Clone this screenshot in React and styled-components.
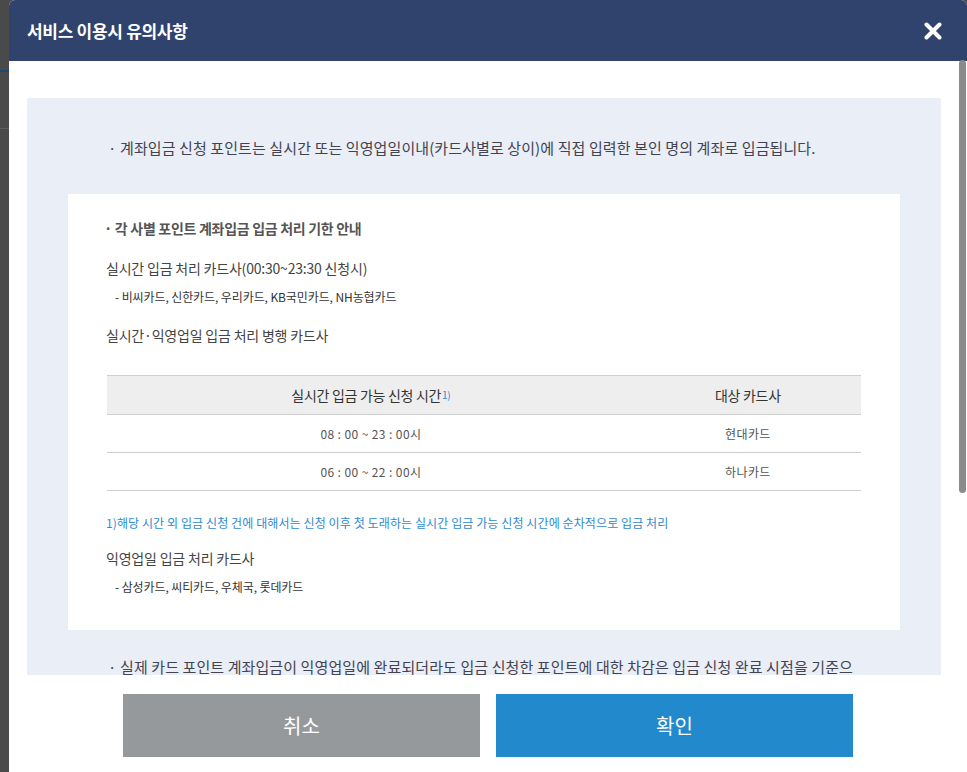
import React from "react";
import styled, { createGlobalStyle } from "styled-components";

const GlobalStyle = createGlobalStyle`
  html, body {
    margin: 0;
    height: 100%;
    overflow: hidden;
  }
  body {
    font-family: "Noto Sans CJK KR", "Noto Sans", sans-serif;
    background:
      linear-gradient(to bottom,
        transparent 70px, #1d4a73 70px, #1d4a73 72px, transparent 72px,
        transparent 128px, #5c5c5c 128px, #5c5c5c 129px, transparent 129px),
      #4a4a4a;
  }
`;

const Page = styled.div`
  height: 100vh;
  display: flex;
  padding-left: 9px;
`;

const Modal = styled.div`
  position: relative;
  width: 958px;
  height: 100%;
  display: flex;
  flex-direction: column;
  background: #fff;
  border-radius: 6px 6px 0 0;
  overflow: hidden;
`;

const Header = styled.header`
  height: 61px;
  flex-shrink: 0;
  display: flex;
  align-items: center;
  justify-content: space-between;
  padding: 0 25px 0 18px;
  background: #2f436d;
`;

const Title = styled.h1`
  margin: 0;
  color: #fff;
  font-size: 17px;
  font-weight: 700;
  letter-spacing: -0.3px;
`;

const CloseButton = styled.button`
  width: 18px;
  height: 18px;
  padding: 0;
  border: 0;
  background: none;
  cursor: pointer;
  display: flex;
`;

const Body = styled.div`
  flex: 1;
  overflow-y: auto;
  scrollbar-width: none;
  padding: 37px 26px 37px 18px;

  &::-webkit-scrollbar {
    display: none;
  }
`;

const ScrollThumb = styled.div`
  position: absolute;
  top: 60px;
  right: 1px;
  width: 7px;
  height: 433px;
  border-radius: 4px;
  background: #8b8b8b;
`;

const NoticeBox = styled.div`
  background: #eaeef7;
  padding: 39px 41px 60px;
`;

const Notice = styled.p`
  margin: ${(p) => p.$top || 0}px 34px 0 40px;
  font-size: 15px;
  line-height: 22px;
  color: #434350;
  letter-spacing: 0.1px;
`;

const Guide = styled.div`
  background: #fff;
  margin-top: 35px;
  padding: 24px 39px 33px 36px;
`;

const GuideTitle = styled.p`
  margin: 0;
  font-size: 14px;
  line-height: 20px;
  font-weight: 700;
  color: #555;
  letter-spacing: -0.3px;
`;

const Line = styled.p`
  margin: ${(p) => p.$top || 0}px 0 0 2px;
  font-size: 14px;
  line-height: 20px;
  color: #444;
  letter-spacing: -0.2px;
`;

const SubLine = styled.p`
  margin: ${(p) => p.$top || 0}px 0 0 11px;
  font-size: 12px;
  line-height: 20px;
  color: #333;
  letter-spacing: -0.1px;
`;

const Footnote = styled.p`
  margin: 22px 0 0 2px;
  font-size: 12px;
  line-height: 20px;
  color: #2f8ad3;
  letter-spacing: 0.1px;
`;

const Table = styled.table`
  width: calc(100% - 3px);
  margin: 30px 0 0 3px;
  border-collapse: collapse;
  border-top: 1px solid #cfcfcf;
`;

const Th = styled.th`
  height: 38px;
  width: ${(p) => p.$w};
  padding: 0;
  background: #eeeeee;
  border-bottom: 1px solid #cfcfcf;
  font-size: 14px;
  font-weight: 400;
  color: #333;
  letter-spacing: -0.3px;
`;

const Td = styled.td`
  height: 37px;
  padding: 0;
  text-align: center;
  border-bottom: 1px solid #cfcfcf;
  font-size: 12px;
  color: #555;
  letter-spacing: 0.4px;
`;

const Sup = styled.span`
  font-size: 10px;
  color: #2f8ad3;
  margin-left: 1px;
  vertical-align: 2px;
`;

const Footer = styled.footer`
  height: 97px;
  flex-shrink: 0;
  display: flex;
  justify-content: center;
  gap: 16px;
  padding-top: 19px;
  box-sizing: border-box;
`;

const ActionButton = styled.button`
  width: 357px;
  height: 63px;
  border: 0;
  font-family: inherit;
  font-size: 20px;
  color: #fff;
  background: ${(p) => (p.$primary ? "#2289cc" : "#95999c")};
  cursor: pointer;
`;

const rows = [
  { time: "08 : 00 ~ 23 : 00시", card: "현대카드" },
  { time: "06 : 00 ~ 22 : 00시", card: "하나카드" },
];

const App = () => {
  return (
    <Page>
      <GlobalStyle />
      <Modal>
        <Header>
          <Title>서비스 이용시 유의사항</Title>
          <CloseButton aria-label="닫기">
            <svg width="18" height="18" viewBox="0 0 18 18">
              <path
                d="M2.5 2.5 L15.5 15.5 M15.5 2.5 L2.5 15.5"
                stroke="#fff"
                strokeWidth="4"
                strokeLinecap="round"
              />
            </svg>
          </CloseButton>
        </Header>
        <Body>
          <NoticeBox>
            <Notice>
              · 계좌입금 신청 포인트는 실시간 또는 익영업일이내(카드사별로 상이)에 직접 입력한 본인 명의 계좌로 입금됩니다.
            </Notice>
            <Guide>
              <GuideTitle>· 각 사별 포인트 계좌입금 입금 처리 기한 안내</GuideTitle>
              <Line $top={20}>실시간 입금 처리 카드사(00:30~23:30 신청시)</Line>
              <SubLine $top={9}>- 비씨카드, 신한카드, 우리카드, KB국민카드, NH농협카드</SubLine>
              <Line $top={18}>실시간·익영업일 입금 처리 병행 카드사</Line>
              <Table>
                <thead>
                  <tr>
                    <Th $w="70%">
                      실시간 입금 가능 신청 시간<Sup>1)</Sup>
                    </Th>
                    <Th $w="30%">대상 카드사</Th>
                  </tr>
                </thead>
                <tbody>
                  {rows.map((row) => (
                    <tr key={row.card}>
                      <Td>{row.time}</Td>
                      <Td>{row.card}</Td>
                    </tr>
                  ))}
                </tbody>
              </Table>
              <Footnote>
                1)해당 시간 외 입금 신청 건에 대해서는 신청 이후 첫 도래하는 실시간 입금 가능 신청 시간에 순차적으로 입금 처리
              </Footnote>
              <Line $top={15}>익영업일 입금 처리 카드사</Line>
              <SubLine $top={9}>- 삼성카드, 씨티카드, 우체국, 롯데카드</SubLine>
            </Guide>
            <Notice $top={26}>
              · 실제 카드 포인트 계좌입금이 익영업일에 완료되더라도 입금 신청한 포인트에 대한 차감은 입금 신청 완료 시점을 기준으로 즉시 차감됩니다.
            </Notice>
            <Notice $top={12}>
              · 카드사 사정에 따라 입금이 지연될 수 있으며, 입금 내역은 신청 내역 조회 화면에서 확인하실 수 있습니다.
            </Notice>
          </NoticeBox>
        </Body>
        <ScrollThumb />
        <Footer>
          <ActionButton>취소</ActionButton>
          <ActionButton $primary>확인</ActionButton>
        </Footer>
      </Modal>
    </Page>
  );
};

export default App;
